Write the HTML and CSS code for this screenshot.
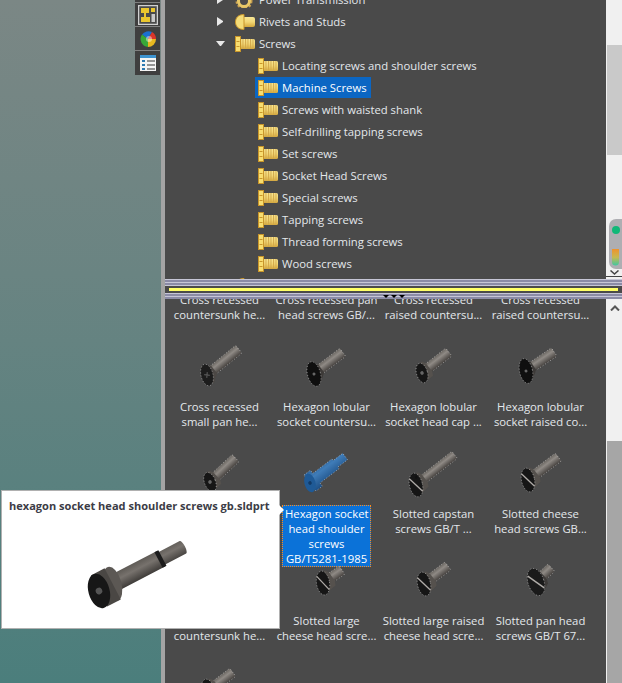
FILE: index.html
```html
<!DOCTYPE html>
<html lang="en">
<head>
<meta charset="utf-8">
<title>Design Library</title>
<link rel="stylesheet" href="styles.css">
</head>
<body>
<svg class="defs" width="0" height="0" aria-hidden="true">
  <defs>
    <linearGradient id="metal" x1="0" y1="0" x2="0" y2="1">
      <stop offset="0" stop-color="#6b6762"/><stop offset=".35" stop-color="#8f8a85"/><stop offset="1" stop-color="#45413e"/>
    </linearGradient>
    <linearGradient id="metal-dark" x1="0" y1="0" x2="0" y2="1">
      <stop offset="0" stop-color="#5f5b56"/><stop offset=".4" stop-color="#77726d"/><stop offset="1" stop-color="#3f3c39"/>
    </linearGradient>
    <linearGradient id="blue" x1="0" y1="0" x2="0" y2="1">
      <stop offset="0" stop-color="#2f659c"/><stop offset=".35" stop-color="#3f7cb8"/><stop offset="1" stop-color="#1d4f85"/>
    </linearGradient>
    <linearGradient id="gold" x1="0" y1="0" x2="0" y2="1">
      <stop offset="0" stop-color="#f8e896"/><stop offset=".5" stop-color="#f2d674"/><stop offset="1" stop-color="#d4a83c"/>
    </linearGradient>
    <linearGradient id="heat" x1="0" y1="0" x2="0" y2="1">
      <stop offset="0" stop-color="#f0922c"/><stop offset=".5" stop-color="#c8b850"/><stop offset="1" stop-color="#40c8a0"/>
    </linearGradient>
    <pattern id="thread" width="2.5" height="10" patternUnits="userSpaceOnUse">
      <rect width="1" height="10" fill="#d2a84a"/>
    </pattern>
    <g id="bolt">
      <rect x="5" y="3" width="15" height="10" rx="1.5" fill="url(#gold)"/>
      <rect x="5" y="3" width="15" height="10" rx="1.5" fill="url(#thread)"/>
      <rect x=".5" y=".5" width="5" height="15" fill="#f8de70" stroke="#c8952a"/>
      <rect x="1.5" y="5" width="3" height="1" fill="#c8952a"/>
      <rect x="1.5" y="10" width="3" height="1" fill="#c8952a"/>
    </g>
    <g id="rivet">
      <rect x="7" y="3" width="13" height="10" rx="2" fill="url(#gold)"/>
      <path d="M9 .5C3 .5 .5 4 .5 8s2.500 7.500 8.500 7.500z" fill="#f4dc78" stroke="#c8952a"/>
    </g>
    <g id="gear">
      <circle cx="9" cy="9" r="6.500" fill="none" stroke="#c8a050" stroke-width="4" stroke-dasharray="2 1.500"/>
      <circle cx="9" cy="9" r="5.500" fill="none" stroke="#e8c868" stroke-width="3"/>
    </g>
    <g id="h-round">
      <path d="M0-11 9-5V5L0 11z" fill="#4c4845"/>
      <ellipse class="edge" rx="6" ry="11" transform="rotate(25)" fill="#1d1d1d"/>
      <path d="M-2-2 2 2M-2 2 2-2" stroke="#555" stroke-width="1.200"/>
    </g>
    <g id="h-flat">
      <path d="M0-11 9-5V5L0 11z" fill="#3d3a38"/>
      <ellipse class="edge" rx="6.500" ry="12.500" transform="rotate(22)" fill="#0f0f0f"/>
      <circle r="1.500" fill="#666"/>
    </g>
    <g id="h-cap">
      <path d="M0-9 7-9 9-5V5L7 9 0 9z" fill="#55514d"/>
      <ellipse class="edge" rx="5.500" ry="10" transform="rotate(22)" fill="#161616"/>
      <circle r="1.800" fill="#666"/>
    </g>
    <g id="h-slot">
      <path d="M0-10 9-9 11-5V5L9 9 0 10z" fill="#55514d"/>
      <ellipse class="edge" rx="6.500" ry="12" transform="rotate(25)" fill="#161616"/>
      <path d="M-1.500-9 1.500 9" stroke="#b0aca8" stroke-width="1.300"/>
    </g>
    <g id="h-pan">
      <path d="M0-12 8-9 10-5V5L8 9 0 12z" fill="#3d3a38"/>
      <ellipse class="edge" rx="8" ry="14" transform="rotate(25)" fill="#1a1a1a"/>
      <path d="M-2-10 2 10" stroke="#b0aca8" stroke-width="1.500"/>
    </g>
  </defs>
</svg>

<div class="page">
  <aside class="desk">
    <nav class="strip">
      <button class="tool" type="button" aria-label="Layout">
        <svg width="20" height="20" viewBox="0 0 20 20"><rect x=".5" y=".5" width="19" height="19" fill="#4a4a4a" stroke="#d0d0d0" stroke-width="1.500"/><path d="M3 3h8v5H8v4h4v5H3v-5h3V8H3z" fill="#eac62e"/><path d="M13 3h4v4h-4z" fill="#eac62e"/><path d="M13.500 9h3.500v8h-3.500z" fill="#c8c8c8"/></svg>
      </button>
      <button class="tool" type="button" aria-label="Appearance">
        <svg width="18" height="18" viewBox="0 0 18 18"><path d="M9 9 3 4.500A8 8 0 0 1 13 2z" fill="#1b6fd0"/><path d="M9 9 13 2A8 8 0 0 1 17 9z" fill="#d8352a"/><path d="M9 9h8A8 8 0 0 1 9 17z" fill="#e8b820"/><path d="M9 9v8A8 8 0 0 1 3 4.500z" fill="#38a838"/><circle cx="10" cy="9" r="3" fill="#fff" opacity=".45"/></svg>
      </button>
      <button class="tool" type="button" aria-label="Properties">
        <svg width="18" height="18" viewBox="0 0 18 18"><rect x="1" y="1" width="16" height="16" fill="#f4f4f4"/><rect x="1" y="1" width="16" height="3" fill="#3d93d0"/><path d="M3 6h3v2H3zM3 10h3v2H3zM3 14h3v2H3z" fill="#2c78b0"/><path d="M8 7h8M8 11h8M8 15h8" stroke="#333"/></svg>
      </button>
    </nav>
  </aside>
  <div class="rule"></div>
  <main class="main">
    <section class="pane-top">
      <ul class="tree">
        <li class="row lvl1"><i class="arrow"></i><svg class="ico" viewBox="0 0 20 16"><use href="#gear"/></svg><span>Power Transmission</span></li>
        <li class="row lvl1"><i class="arrow"></i><svg class="ico" viewBox="0 0 20 16"><use href="#rivet"/></svg><span>Rivets and Studs</span></li>
        <li class="row lvl1"><i class="arrow arrow-open"></i><svg class="ico" viewBox="0 0 20 16"><use href="#bolt"/></svg><span>Screws</span></li>
        <li class="row lvl2"><svg class="ico" viewBox="0 0 20 16"><use href="#bolt"/></svg><span>Locating screws and shoulder screws</span></li>
        <li class="row lvl2 row-on"><svg class="ico" viewBox="0 0 20 16"><use href="#bolt"/></svg><span>Machine Screws</span></li>
        <li class="row lvl2"><svg class="ico" viewBox="0 0 20 16"><use href="#bolt"/></svg><span>Screws with waisted shank</span></li>
        <li class="row lvl2"><svg class="ico" viewBox="0 0 20 16"><use href="#bolt"/></svg><span>Self-drilling tapping screws</span></li>
        <li class="row lvl2"><svg class="ico" viewBox="0 0 20 16"><use href="#bolt"/></svg><span>Set screws</span></li>
        <li class="row lvl2"><svg class="ico" viewBox="0 0 20 16"><use href="#bolt"/></svg><span>Socket Head Screws</span></li>
        <li class="row lvl2"><svg class="ico" viewBox="0 0 20 16"><use href="#bolt"/></svg><span>Special screws</span></li>
        <li class="row lvl2"><svg class="ico" viewBox="0 0 20 16"><use href="#bolt"/></svg><span>Tapping screws</span></li>
        <li class="row lvl2"><svg class="ico" viewBox="0 0 20 16"><use href="#bolt"/></svg><span>Thread forming screws</span></li>
        <li class="row lvl2"><svg class="ico" viewBox="0 0 20 16"><use href="#bolt"/></svg><span>Wood screws</span></li>
        <li class="row lvl1"><i class="arrow arrow-none"></i><svg class="ico" viewBox="0 0 20 16"><use href="#rivet"/></svg></li>
      </ul>
      <div class="track track-top">
        <div class="thumb-top"></div>
        <div class="widget">
          <span class="dot"></span>
          <svg class="heat" width="7" height="17" viewBox="0 0 7 17"><path d="M0 0h7v13a3.500 3.500 0 0 1-7 0z" fill="url(#heat)"/></svg>
        </div>
        <svg class="chev-down" width="9" height="5" viewBox="0 0 9 5"><path d="M.5.500 4.500 4 8.500.5" fill="none" stroke="#444" stroke-width="1.500"/></svg>
      </div>
    </section>

    <div class="splitter">
      <div class="band"></div>
      <div class="gap"><div class="yellow"></div></div>
      <div class="band band-low"><i class="tri"></i><i class="tri"></i><i class="tri"></i></div>
    </div>

    <section class="pane-bottom">
      <div class="grid">
        <article class="item"><div class="pic"></div><p class="label">Cross recessed<br>countersunk he...</p></article>
        <article class="item"><div class="pic"></div><p class="label">Cross recessed pan<br>head screws GB/...</p></article>
        <article class="item"><div class="pic"></div><p class="label">Cross recessed<br>raised countersu...</p></article>
        <article class="item"><div class="pic"></div><p class="label">Cross recessed<br>raised countersu...</p></article>

        <article class="item"><div class="pic"><svg viewBox="0 0 60 50"><g transform="translate(17 35) rotate(-39)"><rect class="edge" y="-5" width="41" height="10" rx="1.500" fill="url(#metal)"/><use href="#h-round"/></g></svg></div><p class="label">Cross recessed<br>small pan he...</p></article>
        <article class="item"><div class="pic"><svg viewBox="0 0 60 50"><g transform="translate(17 34) rotate(-37)"><rect class="edge" y="-5" width="36" height="10" rx="1.500" fill="url(#metal)"/><use href="#h-flat"/></g></svg></div><p class="label">Hexagon lobular<br>socket countersu...</p></article>
        <article class="item"><div class="pic"><svg viewBox="0 0 60 50"><g transform="translate(18 33) rotate(-38)"><rect class="edge" y="-5" width="34" height="10" rx="1.500" fill="url(#metal)"/><use href="#h-cap"/></g></svg></div><p class="label">Hexagon lobular<br>socket head cap ...</p></article>
        <article class="item"><div class="pic"><svg viewBox="0 0 60 50"><g transform="translate(15 31) rotate(-34)"><rect class="edge" y="-5" width="34" height="10" rx="1.500" fill="url(#metal)"/><use href="#h-flat"/></g></svg></div><p class="label">Hexagon lobular<br>socket raised co...</p></article>

        <article class="item"><div class="pic"><svg viewBox="0 0 60 50"><g transform="translate(20 35) rotate(-43)"><rect class="edge" y="-5" width="35" height="10" rx="1.500" fill="url(#metal)"/><use href="#h-cap"/></g></svg></div></article>
        <article class="item"><div class="pic"><svg viewBox="0 0 60 50"><g transform="translate(13 36) rotate(-37)"><path class="edge" d="M0-10H8V-6H32V-4H44V4H32V6H8V10H0z" fill="url(#blue)"/><ellipse rx="5.500" ry="9.500" transform="rotate(22)" fill="#1f5a96"/><circle r="1.800" fill="#123a66"/></g></svg></div><p class="label label-on">Hexagon socket<br>head shoulder<br>screws<br>GB/T5281-1985</p></article>
        <article class="item"><div class="pic"><svg viewBox="0 0 60 50"><g transform="translate(12 38) rotate(-38)"><rect class="edge" y="-4.500" width="49" height="9" rx="1.500" fill="url(#metal)"/><use href="#h-slot"/><circle cx="5" cy="-6" r="1.300" fill="#111"/></g></svg></div><p class="label">Slotted capstan<br>screws GB/T ...</p></article>
        <article class="item"><div class="pic"><svg viewBox="0 0 60 50"><g transform="translate(17 33) rotate(-37)"><rect class="edge" y="-5" width="38" height="10" rx="1.500" fill="url(#metal)"/><use href="#h-slot"/></g></svg></div><p class="label">Slotted cheese<br>head screws GB...</p></article>

        <article class="item"><div class="pic"></div><p class="label"><span class="blank"></span>countersunk he...</p></article>
        <article class="item"><div class="pic"><svg viewBox="0 0 60 50"><g transform="translate(26 29) rotate(-34)"><rect class="edge" y="-5" width="23" height="10" rx="1.500" fill="url(#metal)"/><use href="#h-slot"/></g></svg></div><p class="label">Slotted large<br>cheese head scre...</p></article>
        <article class="item"><div class="pic"><svg viewBox="0 0 60 50"><g transform="translate(20 30) rotate(-37)"><rect class="edge" y="-5" width="30" height="10" rx="1.500" fill="url(#metal)"/><use href="#h-slot"/></g></svg></div><p class="label">Slotted large raised<br>cheese head scre...</p></article>
        <article class="item"><div class="pic"><svg viewBox="0 0 60 50"><g transform="translate(25 28) rotate(-43)"><rect class="edge" y="-5" width="21" height="10" rx="1.500" fill="url(#metal)"/><use href="#h-pan"/></g></svg></div><p class="label">Slotted pan head<br>screws GB/T 67...</p></article>

        <article class="item"><div class="pic"><svg viewBox="0 0 60 50"><g transform="translate(18 30) rotate(-37)"><rect class="edge" y="-5" width="31" height="10" rx="1.500" fill="url(#metal)"/><use href="#h-slot"/></g></svg></div></article>
      </div>
      <div class="track track-bottom">
        <svg class="chev-up" width="10" height="6" viewBox="0 0 10 6"><path d="M1 5.500 5 1.500 9 5.500" fill="none" stroke="#555" stroke-width="2"/></svg>
        <div class="thumb-bottom"></div>
      </div>
    </section>
  </main>

  <div class="tooltip">
    <h2 class="tip-title">hexagon socket head shoulder screws gb.sldprt</h2>
    <svg class="tip-pic" viewBox="0 0 120 80" width="120" height="80">
      <g transform="translate(17 57) rotate(-27.500) scale(2.200)">
        <path d="M7-4H32V-3.200H43a1 3.200 0 0 1 0 6.400H32V4H7z" fill="url(#metal-dark)"/>
        <rect x="30.500" y="-4" width="2" height="8" fill="#1c1c1c"/>
        <ellipse cx="7" rx="4" ry="8" transform="rotate(12 7 0)" fill="#5c5854"/>
        <path d="M0-8 7-8 7 8 0 8z" fill="#4a4744"/>
        <ellipse rx="4.800" ry="8" transform="rotate(12)" fill="#171717"/>
        <circle r="1.500" fill="#555"/>
      </g>
    </svg>
  </div>
</div>
</body>
</html>
```
FILE: styles.css
```css
* { box-sizing: border-box; }
html, body { margin: 0; padding: 0; height: 683px; overflow: hidden; }
body { font-family: "Open Sans", "Noto Sans", sans-serif; font-size: 11.3px; color: #e4e8ec; }
.defs { position: absolute; }
.page { display: flex; width: 622px; height: 683px; position: relative; overflow: hidden; }

.desk { width: 161px; flex: none; display: flex; justify-content: flex-end; padding-right: 1px; background: linear-gradient(180deg, #7b8785 0%, #6a8482 40%, #4b7e7c 100%); }
.strip { width: 25px; height: 75px; background: #3f3f3f; display: flex; flex-direction: column; padding-top: 2px; }
.tool { width: 25px; height: 24px; border: 0; border-top: 1px solid #808080; background: transparent; padding: 0; display: flex; align-items: center; justify-content: center; }
.rule { width: 4px; flex: none; background: #a4a4a4; }

.main { flex: 1; min-width: 0; display: flex; flex-direction: column; background: #4a4a4a; }
.pane-top { height: 279px; flex: none; display: flex; overflow: hidden; }
.pane-bottom { flex: 1; min-height: 0; display: flex; overflow: hidden; }

.tree { list-style: none; margin: -11px 0 0; padding: 0; flex: 1; min-width: 0; }
.row { height: 22px; display: flex; align-items: center; white-space: nowrap; padding-bottom: 1px; }
.lvl1 { padding-left: 52px; }
.lvl2 { padding-left: 93px; }
.ico { width: 20px; height: 16px; flex: none; margin-right: 4px; }
.arrow { width: 7px; height: 9px; margin-right: 11px; flex: none; border-left: 6px solid #e8e8e8; border-top: 4.500px solid transparent; border-bottom: 4.500px solid transparent; }
.arrow-open { border-left: 4.500px solid transparent; border-right: 4.500px solid transparent; border-top: 5px solid #e8e8e8; border-bottom: 0; height: 5px; width: 9px; margin-left: -1px; margin-right: 10px; }
.arrow-none { border-color: transparent; }
.row-on span { background: #0b66c3; color: #fff; height: 21px; line-height: 21px; padding-right: 4px; margin-left: -27px; padding-left: 27px; position: relative; z-index: 0; }
.row-on .ico { position: relative; z-index: 1; }

.track { width: 16px; flex: none; background: #f0f0f0; padding-left: 1px; position: relative; }
.track-top { height: 279px; padding-top: 45px; border-bottom: 1px solid #f0f0f0; }
.thumb-top { height: 110px; background: #c9c9c9; }
.widget { position: absolute; left: 3px; right: 0; top: 219px; height: 50px; background: #aeaeb2; border-radius: 7px 0 0 7px; display: flex; flex-direction: column; align-items: center; padding-top: 7px; }
.dot { width: 8px; height: 8px; border-radius: 50%; background: #10b878; margin-bottom: 15px; }
.chev-down { position: absolute; left: 4px; top: 270px; }
.track-top::after { content: ""; position: absolute; left: 0; right: 0; top: 276px; height: 1px; background: #444; }

.splitter { height: 20px; flex: none; display: flex; flex-direction: column; background: #4a4a4a; position: relative; z-index: 2; }
.band { height: 7px; flex: none; background: repeating-linear-gradient(180deg, #c6c6d6 0, #c6c6d6 1px, #8b8ba6 1px, #8b8ba6 3px); display: flex; justify-content: center; align-items: flex-start; gap: 2px; padding-top: 2px; }
.band-low { height: 6px; padding-top: 2px; }
.gap { height: 7px; flex: none; padding: 2px 4px 2px; }
.yellow { height: 3px; background: #ffff66; }
.tri { width: 6px; height: 3px; border-left: 3px solid transparent; border-right: 3px solid transparent; border-top: 3px solid #000; }

.grid { flex: 1; min-width: 0; margin-top: -80px; padding-left: 1px; display: grid; grid-template-columns: repeat(4, 107px); grid-auto-rows: 107px; align-content: start; }
.item { display: flex; flex-direction: column; align-items: center; min-width: 0; }
.pic { height: 72px; width: 100%; flex: none; display: flex; justify-content: center; padding-top: 14px; }
.pic svg { width: 60px; height: 50px; display: block; overflow: visible; }
.edge { stroke: #fff; stroke-width: .5; stroke-dasharray: 1 2; stroke-opacity: .85; }
.label { margin: 0; padding: 0 2px; width: 89px; border: 1px solid transparent; text-align: center; line-height: 15px; white-space: nowrap; display: flex; flex-direction: column; align-items: center; font-size: 11.3px; }
.blank { display: block; height: 15px; }
.label-on { display: block; background: #0b72d8; border: 1px dotted #ff8c1a; color: #fff; height: 62px; }

.track-bottom { padding-top: 6px; }
.chev-up { display: block; margin-left: 3px; }
.thumb-bottom { height: 242px; margin-top: 130px; background: #a6a6a6; }

.tooltip { position: absolute; left: 1px; top: 490px; width: 279px; height: 139px; background: #fff; border: 1px solid #b0b0b0; color: #3c3c46; padding: 7px 7px 0; z-index: 5; }
.tooltip::after { content: ""; position: absolute; left: 100%; top: 14px; border-left: 5px solid #fff; border-top: 5px solid transparent; border-bottom: 5px solid transparent; }
.tip-title { margin: 0; font-size: 11.05px; font-weight: 700; line-height: 16px; white-space: nowrap; }
.tip-pic { display: block; margin: 20px 0 0 73px; overflow: visible; }
```
